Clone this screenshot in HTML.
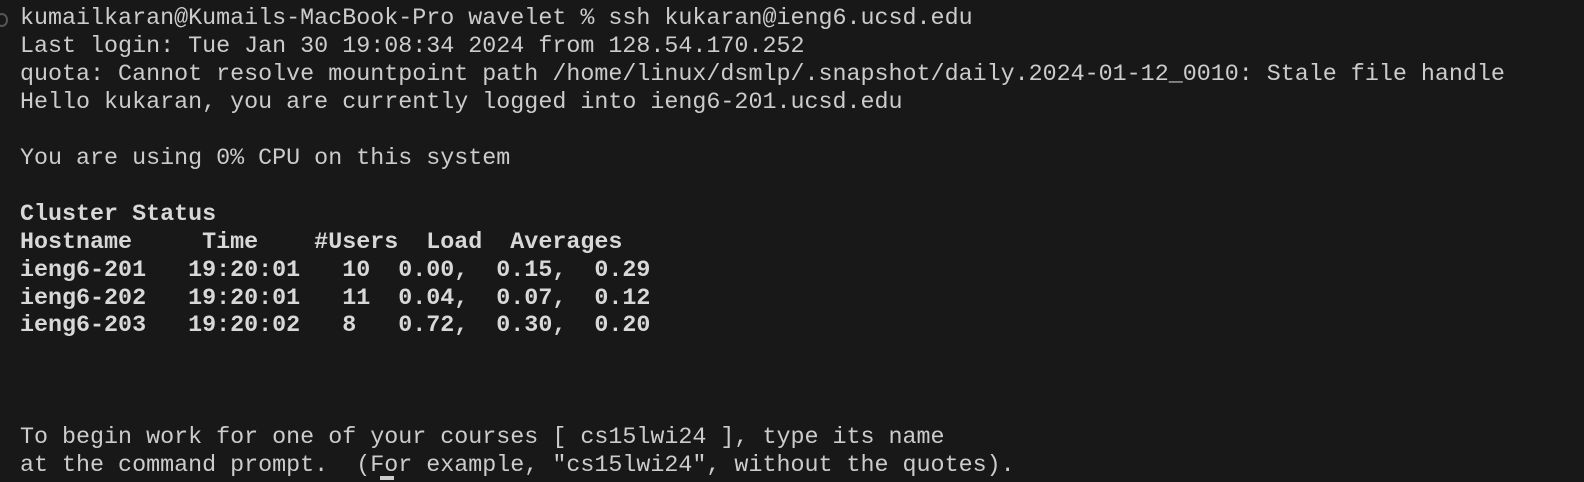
<!DOCTYPE html>
<html><head><style>
html,body{margin:0;padding:0;background:#181818;width:1584px;height:482px;overflow:hidden}
pre{margin:0;position:absolute;left:20px;top:6px;font-family:"Liberation Mono",monospace;font-size:23.35px;line-height:27.95px;color:#cccccc;white-space:pre}
b{font-weight:bold;color:#d8d8d8}
.dot{position:absolute;left:-4px;top:13px;width:8px;height:10px;border:2px solid #555;border-radius:50%}
.cur{position:absolute;left:380px;top:476px;width:14px;height:4px;background:#ccc}
</style></head><body>
<div class="dot"></div>
<pre>kumailkaran@Kumails-MacBook-Pro wavelet % ssh kukaran@ieng6.ucsd.edu
Last login: Tue Jan 30 19:08:34 2024 from 128.54.170.252
quota: Cannot resolve mountpoint path /home/linux/dsmlp/.snapshot/daily.2024-01-12_0010: Stale file handle
Hello kukaran, you are currently logged into ieng6-201.ucsd.edu

You are using 0% CPU on this system

<b>Cluster Status
Hostname     Time    #Users  Load  Averages
ieng6-201   19:20:01   10  0.00,  0.15,  0.29
ieng6-202   19:20:01   11  0.04,  0.07,  0.12
ieng6-203   19:20:02   8   0.72,  0.30,  0.20</b>



To begin work for one of your courses [ cs15lwi24 ], type its name
at the command prompt.  (For example, "cs15lwi24", without the quotes).</pre>
<div class="cur"></div>
</body></html>
